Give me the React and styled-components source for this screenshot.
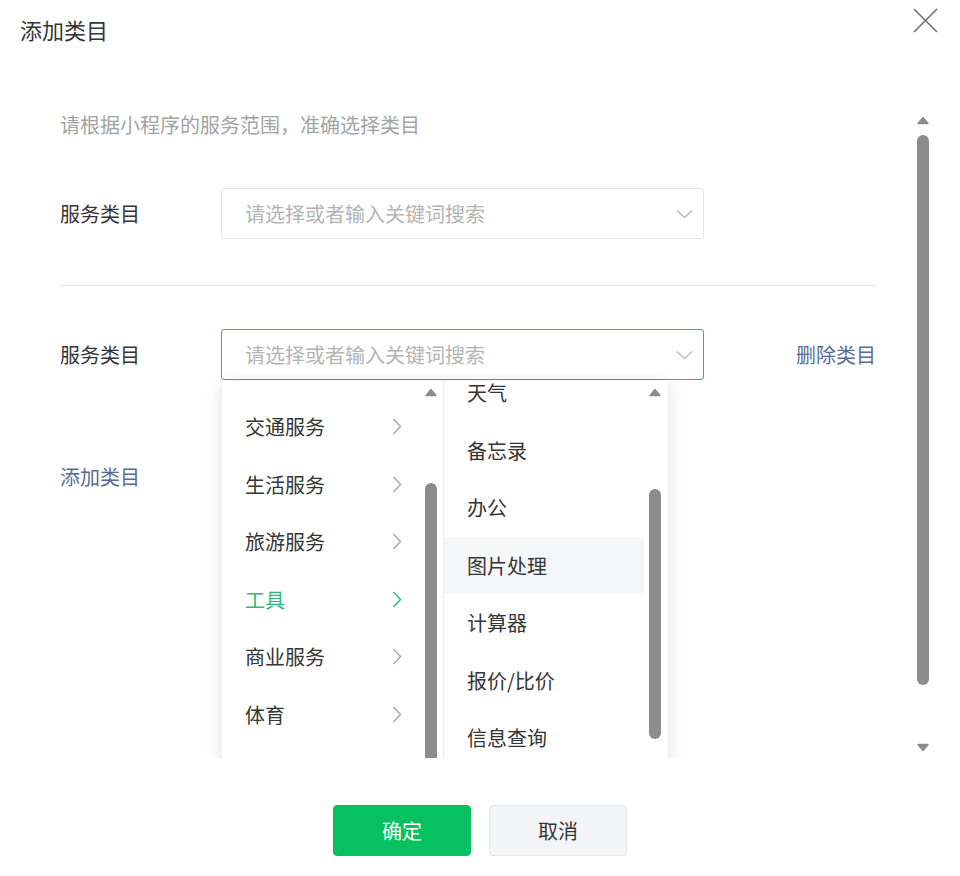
import React from "react";
import styled, { createGlobalStyle } from "styled-components";

const Global = createGlobalStyle`
  html, body { margin: 0; padding: 0; background: #fff; }
  body { font-family: "Noto Sans CJK SC", "Noto Sans", sans-serif; color: #353535; }
  * { box-sizing: border-box; }
`;

const Dialog = styled.div`
  width: 960px;
  height: 876px;
  background: #fff;
  display: flex;
  flex-direction: column;
`;

const Header = styled.div`
  height: 108px;
  padding: 15px 22px 0 20px;
  display: flex;
  justify-content: space-between;
  align-items: flex-start;
`;

const Title = styled.div`
  font-size: 22px;
  line-height: 28px;
  color: #353535;
`;

const Close = styled.button`
  border: 0;
  background: none;
  padding: 0;
  margin-top: -7px;
  width: 25px;
  height: 25px;
  cursor: pointer;
  display: flex;
`;

const Body = styled.div`
  height: 650px;
  display: flex;
  overflow: hidden;
  padding: 0 31px 0 60px;
`;

const Content = styled.div`
  flex: 0 0 816px;
  display: flex;
  flex-direction: column;
`;

const Desc = styled.div`
  font-size: 20px;
  line-height: 28px;
  padding-top: 3px;
  color: #a3a3a3;
`;

const Row = styled.div`
  display: flex;
  align-items: center;
  margin-top: ${(p) => p.$mt}px;
`;

const Label = styled.div`
  width: 161px;
  font-size: 20px;
  color: #353535;
`;

const SelectWrap = styled.div`
  position: relative;
  width: 483px;
`;

const Select = styled.div`
  height: 51px;
  border: 1px solid ${(p) => (p.$focus ? "#22bd72" : "#e6e6e6")};
  border-radius: 3px;
  display: flex;
  align-items: center;
  justify-content: space-between;
  padding: 0 10px 0 23px;
  font-size: 20px;
  color: #b4b4b4;
  background: #fff;
`;

const Divider = styled.div`
  height: 1px;
  background: #e7e7e7;
  margin-top: 46px;
`;

const Link = styled.a`
  font-size: 20px;
  line-height: 28px;
  color: #576b95;
  text-decoration: none;
  cursor: pointer;
  margin-left: ${(p) => (p.$auto ? "auto" : "0")};
  margin-top: ${(p) => p.$mt || 0}px;
  align-self: flex-start;
`;

const LinkRight = styled(Link)`
  align-self: center;
`;

const Dropdown = styled.div`
  position: absolute;
  top: 52px;
  left: 1px;
  width: 446px;
  height: 420px;
  background: #fff;
  box-shadow: 0 3px 16px rgba(0, 0, 0, 0.13);
  display: flex;
  z-index: 2;
`;

const Column = styled.div`
  width: ${(p) => p.$w}px;
  display: flex;
  padding-right: 6px;
  border-right: ${(p) => (p.$divider ? "1px solid #ececec" : "0")};
  overflow: hidden;
`;

const List = styled.div`
  flex: 1;
  overflow: hidden;
`;

const ListInner = styled.div`
  margin-top: ${(p) => p.$offset}px;
`;

const Item = styled.div`
  height: 57.5px;
  display: flex;
  align-items: center;
  justify-content: space-between;
  padding: 0 18px 0 23px;
  font-size: 20px;
  color: ${(p) => (p.$active ? "#2fb874" : "#353535")};
  background: ${(p) => (p.$hover ? "#f5f6f7" : "transparent")};
`;

const Bar = styled.div`
  width: 12px;
  margin-left: ${(p) => p.$ml || 0}px;
  display: flex;
  flex-direction: column;
  align-items: center;
  flex-shrink: 0;
`;

const ArrowBox = styled.div`
  height: ${(p) => p.$h}px;
  flex-shrink: 0;
  display: flex;
  align-items: center;
  justify-content: center;
`;

const Thumb = styled.div`
  width: 12px;
  height: ${(p) => p.$h}px;
  margin-top: ${(p) => p.$mt}px;
  border-radius: 6px;
  background: #8c8c8c;
  flex-shrink: 0;
`;

const Spacer = styled.div`
  flex: 1;
`;

const MainBar = styled(Bar)`
  margin-left: 41px;
`;

const Footer = styled.div`
  padding-top: 47px;
  display: flex;
  justify-content: center;
  gap: 18px;
`;

const Button = styled.button`
  width: 138px;
  height: 51px;
  border-radius: 4px;
  font-family: inherit;
  font-size: 20px;
  cursor: pointer;
  border: 1px solid ${(p) => (p.$primary ? "#07c160" : "#e4e6e8")};
  background: ${(p) => (p.$primary ? "#07c160" : "#f4f5f6")};
  color: ${(p) => (p.$primary ? "#fff" : "#353535")};
`;

const Tri = ({ down }) => (
  <svg width="14" height="9" viewBox="0 0 14 9">
    <path
      d={down ? "M2 1.5 L12 1.5 L7 7.5 Z" : "M2 7.5 L12 7.5 L7 1.5 Z"}
      fill="#8c8c8c"
      stroke="#8c8c8c"
      strokeWidth="1.5"
      strokeLinejoin="round"
    />
  </svg>
);

const ChevronDown = () => (
  <svg width="17" height="10" viewBox="0 0 17 10">
    <path d="M1 1.5 L8.5 8.5 L16 1.5" fill="none" stroke="#b8b8b8" strokeWidth="1.3" />
  </svg>
);

const ChevronRight = ({ color }) => (
  <svg width="10" height="17" viewBox="0 0 10 17">
    <path d="M1.5 1 L8.5 8.5 L1.5 16" fill="none" stroke={color} strokeWidth="1.4" />
  </svg>
);

const CloseIcon = () => (
  <svg width="25" height="25" viewBox="0 0 25 25">
    <path d="M1 1 L24 24 M24 1 L1 24" stroke="#6f6f6f" strokeWidth="1.6" />
  </svg>
);

const left = ["交通服务", "生活服务", "旅游服务", "工具", "商业服务", "体育"];
const right = ["天气", "备忘录", "办公", "图片处理", "计算器", "报价/比价", "信息查询"];

export default function App() {
  return (
    <>
      <Global />
      <Dialog>
        <Header>
          <Title>添加类目</Title>
          <Close aria-label="关闭">
            <CloseIcon />
          </Close>
        </Header>
        <Body>
          <Content>
            <Desc>请根据小程序的服务范围，准确选择类目</Desc>
            <Row $mt={49}>
              <Label>服务类目</Label>
              <SelectWrap>
                <Select>
                  <span>请选择或者输入关键词搜索</span>
                  <ChevronDown />
                </Select>
              </SelectWrap>
            </Row>
            <Divider />
            <Row $mt={43}>
              <Label>服务类目</Label>
              <SelectWrap>
                <Select $focus>
                  <span>请选择或者输入关键词搜索</span>
                  <ChevronDown />
                </Select>
                <Dropdown>
                  <Column $w={222} $divider>
                    <List>
                      <ListInner $offset={17}>
                        {left.map((t) => (
                          <Item key={t} $active={t === "工具"}>
                            <span>{t}</span>
                            <ChevronRight color={t === "工具" ? "#2fb874" : "#a8a8a8"} />
                          </Item>
                        ))}
                      </ListInner>
                    </List>
                    <Bar $ml={5}>
                      <ArrowBox $h={22}>
                        <Tri />
                      </ArrowBox>
                      <Thumb $mt={80} $h={300} />
                    </Bar>
                  </Column>
                  <Column $w={223}>
                    <List>
                      <ListInner $offset={-17}>
                        {right.map((t) => (
                          <Item key={t} $hover={t === "图片处理"}>
                            <span>{t}</span>
                          </Item>
                        ))}
                      </ListInner>
                    </List>
                    <Bar $ml={5}>
                      <ArrowBox $h={22}>
                        <Tri />
                      </ArrowBox>
                      <Thumb $mt={86} $h={250} />
                    </Bar>
                  </Column>
                </Dropdown>
              </SelectWrap>
              <LinkRight $auto>删除类目</LinkRight>
            </Row>
            <Link $mt={83}>添加类目</Link>
          </Content>
          <MainBar>
            <ArrowBox $h={24}>
              <Tri />
            </ArrowBox>
            <Thumb $mt={3} $h={550} />
            <Spacer />
            <ArrowBox $h={22}>
              <Tri down />
            </ArrowBox>
          </MainBar>
        </Body>
        <Footer>
          <Button $primary>确定</Button>
          <Button>取消</Button>
        </Footer>
      </Dialog>
    </>
  );
}
